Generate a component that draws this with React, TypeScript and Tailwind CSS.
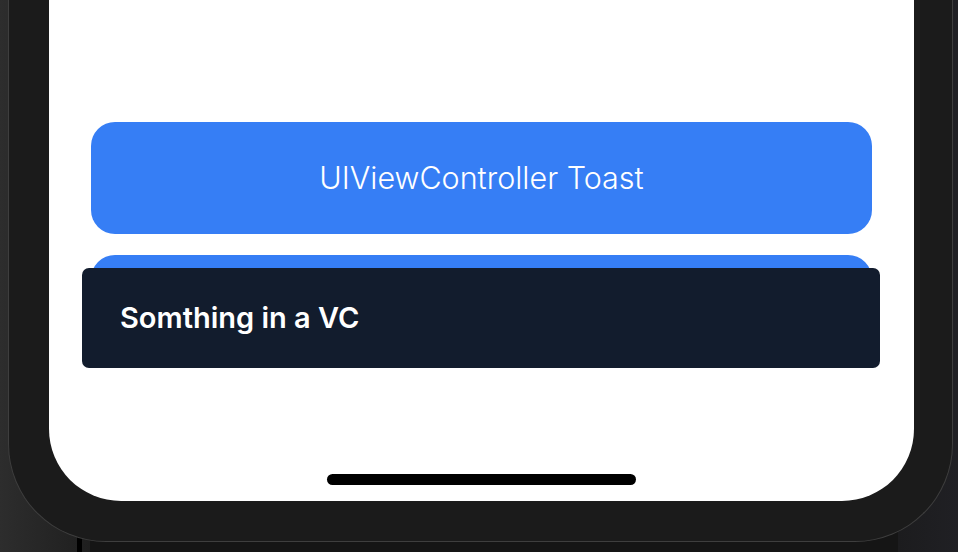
export default function App() {
  return (
    <div className="relative w-[958px] h-[552px] overflow-hidden bg-[#151515]">
      {/* desk background */}
      <div className="absolute inset-y-0 left-0 w-[90px] bg-gradient-to-r from-[#2d2d2d] to-[#1f1f1f]" />
      <div className="absolute inset-y-0 right-0 w-[60px] bg-gradient-to-r from-[#1c1c1e] to-[#202024]" />
      <div className="absolute left-[77px] top-[530px] w-[5px] h-[22px] bg-black" />

      {/* phone body */}
      <div className="relative ml-[8px] w-[945px] h-[542px] bg-[#1b1b1b] border-x border-b border-[#3e3e3e] rounded-b-[98px] pl-[40px] pr-[38px] pb-[40px]">
        {/* screen */}
        <div className="relative h-full bg-white rounded-b-[72px] flex flex-col">
          <button className="mt-[122px] mx-[42px] h-[112px] rounded-[24px] bg-[#367ef5] text-white text-[30.5px] font-[Inter,'Noto_Sans',sans-serif] font-light">
            UIViewController Toast
          </button>
          <div className="mt-[21px] mx-[42px] h-[112px] rounded-[24px] bg-[#367ef5]" />

          {/* toast */}
          <div className="absolute left-[33px] right-[34px] top-[268px] h-[100px] rounded-[7px] bg-[#121c2d] flex items-center pl-[38px]">
            <span className="text-white text-[29px] font-semibold font-[Inter,'Noto_Sans',sans-serif]">
              Somthing in a VC
            </span>
          </div>

          {/* home indicator */}
          <div className="mt-auto mb-[16px] mx-auto w-[309px] h-[11px] rounded-full bg-black" />
        </div>
      </div>
    </div>
  );
}
